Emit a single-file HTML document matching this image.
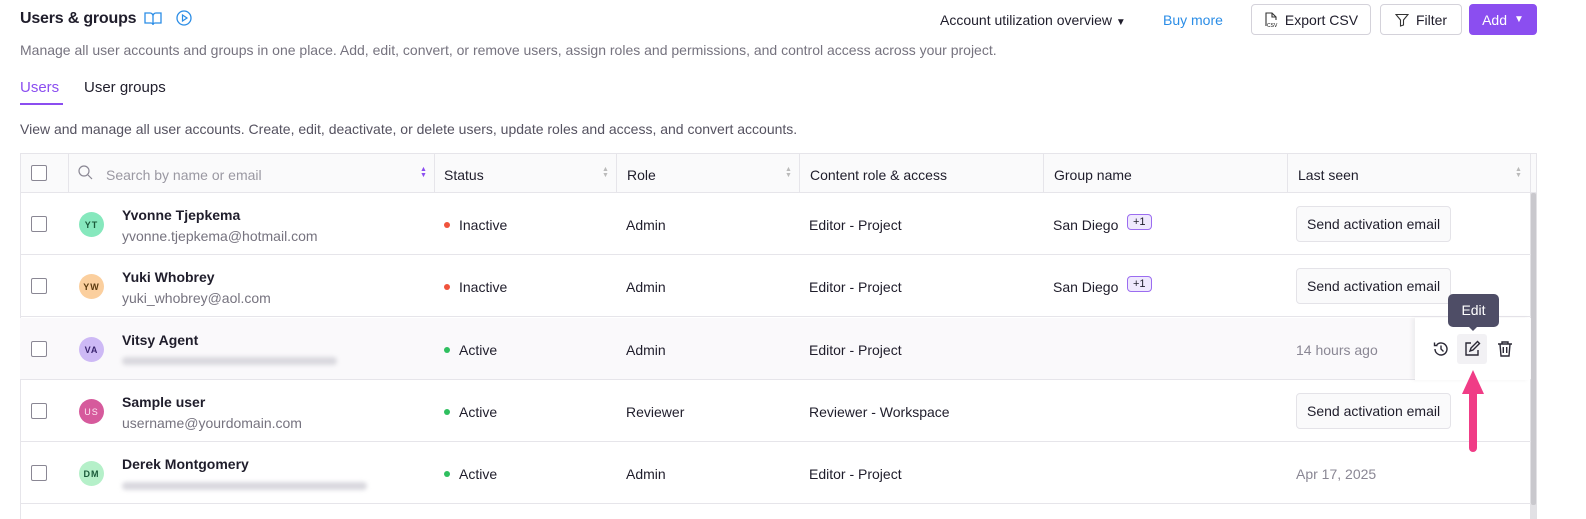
<!DOCTYPE html>
<html><head><meta charset="utf-8"><style>
*{box-sizing:border-box;margin:0;padding:0}
body{width:1586px;height:519px;overflow:hidden;background:#fff;font-family:"Liberation Sans",sans-serif;color:#1f1d2b;position:relative}
.abs{position:absolute}
.t{font-size:14px}
.btn{position:absolute;top:4px;height:31px;border:1px solid #d4d2da;border-radius:4px;background:#fff;font-size:14px;display:flex;align-items:center;justify-content:center;gap:7px}
.cb{position:absolute;width:16px;height:16px;border:1.3px solid #8a8794;border-radius:2px;background:#fff}
.row{position:absolute;left:20px;width:1511px;height:62px;border-bottom:1px solid #e6e5ea}
.av{position:absolute;width:25px;height:25px;border-radius:50%;font-size:9px;font-weight:bold;display:flex;align-items:center;justify-content:center;letter-spacing:1px}
.nm{position:absolute;font-size:14px;font-weight:bold}
.em{position:absolute;font-size:14px;color:#76737f}
.dot{position:absolute;width:6px;height:6px;border-radius:50%}
.sab{position:absolute;height:36px;border:1px solid #e4e3e8;border-radius:4px;background:#fafafb;font-size:14px;padding:0 10px;display:flex;align-items:center}
.badge{position:absolute;border:1px solid #9b6cf0;background:#efe9fd;border-radius:4px;font-size:11px;padding:1px 5px}
.hd{position:absolute;top:167px;font-size:14px}
.sep{position:absolute;top:153px;width:1px;height:40px;background:#e6e5ea}
.blur{position:absolute;height:8px;border-radius:4px;background:#d9d8de;filter:blur(2px)}
</style></head><body>
<div class="abs" style="left:20px;top:10px;font-size:16px;font-weight:bold;letter-spacing:-0.2px">Users &amp; groups</div>
<svg class="abs" style="left:144px;top:11px" width="18" height="15" viewBox="0 0 18 15"><path d="M1 2h5a3 3 0 0 1 3 3v9a2 2 0 0 0-2-2H1zM17 2h-5a3 3 0 0 0-3 3v9a2 2 0 0 1 2-2h6z" fill="none" stroke="#2b8de6" stroke-width="1.3"/></svg>
<svg class="abs" style="left:176px;top:10px" width="16" height="16" viewBox="0 0 16 16"><circle cx="8" cy="8" r="7" fill="none" stroke="#2b8de6" stroke-width="1.3"/><path d="M6.5 5v6l4.5-3z" fill="none" stroke="#2b8de6" stroke-width="1.2"/></svg>
<div class="abs t" style="left:940px;top:12px">Account utilization overview <span style="font-size:10px">▼</span></div>
<div class="abs t" style="left:1163px;top:12px;color:#2b8de6">Buy more</div>
<div class="btn" style="left:1251px;width:120px"><svg width="14" height="16" viewBox="0 0 14 16"><path d="M2 14V1h6l4 4v3M8 1v4h4" fill="none" stroke="#333" stroke-width="1.1"/><text x="3" y="15" font-size="5" font-family="Liberation Sans">CSV</text></svg>Export CSV</div>
<div class="btn" style="left:1380px;width:82px"><svg width="14" height="14" viewBox="0 0 14 14"><path d="M1 1.5h12L8.5 7v5L5.5 13V7z" fill="none" stroke="#333" stroke-width="1.1"/></svg>Filter</div>
<div class="btn" style="left:1469px;width:68px;background:#8b4ef0;border-color:#8b4ef0;color:#fff">Add <span style="font-size:10px">▼</span></div>
<div class="abs t" style="left:20px;top:42px;color:#76737f">Manage all user accounts and groups in one place. Add, edit, convert, or remove users, assign roles and permissions, and control access across your project.</div>
<div class="abs" style="left:20px;top:79px;font-size:15px;color:#8b4ef0">Users</div>
<div class="abs" style="left:20px;top:103px;width:43px;height:2px;background:#8b4ef0"></div>
<div class="abs" style="left:84px;top:79px;font-size:15px">User groups</div>
<div class="abs t" style="left:20px;top:121px;color:#555260">View and manage all user accounts. Create, edit, deactivate, or delete users, update roles and access, and convert accounts.</div>

<div class="abs" style="left:20px;top:153px;width:1517px;height:40px;background:#fafafb;border:1px solid #e6e5ea"></div>
<div class="abs" style="left:20px;top:193px;width:1px;height:326px;background:#e6e5ea"></div>
<div class="abs" style="left:1530px;top:193px;width:7px;height:326px;background:#e2e1e5"></div>
<div class="abs" style="left:1531px;top:193px;width:5px;height:312px;background:#c9c8cd;border-radius:2px"></div>
<div class="sep" style="left:68px"></div><div class="sep" style="left:434px"></div><div class="sep" style="left:616px"></div><div class="sep" style="left:799px"></div><div class="sep" style="left:1043px"></div><div class="sep" style="left:1287px"></div><div class="sep" style="left:1530px"></div>
<div class="cb" style="left:31px;top:165px"></div>
<svg class="abs" style="left:78px;top:165px" width="15" height="15" viewBox="0 0 15 15"><circle cx="6" cy="6" r="5" fill="none" stroke="#8a8794" stroke-width="1.2"/><path d="M10 10l4 4" stroke="#8a8794" stroke-width="1.2"/></svg>
<div class="hd" style="left:106px;color:#9a98a2">Search by name or email</div>
<div class="abs" style="left:420px;top:167px;font-size:7px;line-height:6px;color:#8b4ef0">▲<br>▼</div>
<div class="hd" style="left:444px">Status</div><div class="abs" style="left:602px;top:167px;font-size:7px;line-height:6px;color:#bbb">▲<br>▼</div>
<div class="hd" style="left:627px">Role</div><div class="abs" style="left:785px;top:167px;font-size:7px;line-height:6px;color:#bbb">▲<br>▼</div>
<div class="hd" style="left:810px">Content role &amp; access</div>
<div class="hd" style="left:1054px">Group name</div>
<div class="hd" style="left:1298px">Last seen</div><div class="abs" style="left:1515px;top:167px;font-size:7px;line-height:6px;color:#bbb">▲<br>▼</div>

<div class="row" style="top:193px"></div>
<div class="row" style="top:255px"></div>
<div class="row" style="top:318px;background:#faf9fb"></div>
<div class="row" style="top:380px"></div>
<div class="row" style="top:442px"></div>

<div class="cb" style="left:31px;top:216px"></div>
<div class="av" style="left:79px;top:212px;background:#86e8bd;color:#1a5a3a">YT</div>
<div class="nm" style="left:122px;top:207px">Yvonne Tjepkema</div><div class="em" style="left:122px;top:228px">yvonne.tjepkema@hotmail.com</div>
<div class="dot" style="left:444px;top:222px;background:#f0533c"></div><div class="abs t" style="left:459px;top:217px">Inactive</div>
<div class="abs t" style="left:626px;top:217px">Admin</div><div class="abs t" style="left:809px;top:217px">Editor - Project</div>
<div class="abs t" style="left:1053px;top:217px">San Diego</div><div class="badge" style="left:1127px;top:214px">+1</div>
<div class="sab" style="left:1296px;top:206px">Send activation email</div>

<div class="cb" style="left:31px;top:278px"></div>
<div class="av" style="left:79px;top:274px;background:#fbcf9e;color:#5a3a10">YW</div>
<div class="nm" style="left:122px;top:269px">Yuki Whobrey</div><div class="em" style="left:122px;top:290px">yuki_whobrey@aol.com</div>
<div class="dot" style="left:444px;top:284px;background:#f0533c"></div><div class="abs t" style="left:459px;top:279px">Inactive</div>
<div class="abs t" style="left:626px;top:279px">Admin</div><div class="abs t" style="left:809px;top:279px">Editor - Project</div>
<div class="abs t" style="left:1053px;top:279px">San Diego</div><div class="badge" style="left:1127px;top:276px">+1</div>
<div class="sab" style="left:1296px;top:268px">Send activation email</div>

<div class="cb" style="left:31px;top:341px"></div>
<div class="av" style="left:79px;top:337px;background:#cdb9f5;color:#3a2470">VA</div>
<div class="nm" style="left:122px;top:332px">Vitsy Agent</div><div class="blur" style="left:122px;top:357px;width:215px"></div>
<div class="dot" style="left:444px;top:347px;background:#2fbf5f"></div><div class="abs t" style="left:459px;top:342px">Active</div>
<div class="abs t" style="left:626px;top:342px">Admin</div><div class="abs t" style="left:809px;top:342px">Editor - Project</div>
<div class="abs t" style="left:1296px;top:342px;color:#8a8794">14 hours ago</div>
<div class="abs" style="left:1415px;top:318px;width:115px;height:62px;background:#fff;box-shadow:-3px 0 4px rgba(0,0,0,0.05)"></div>
<svg class="abs" style="left:1432px;top:340px" width="18" height="18" viewBox="0 0 18 18"><path d="M3 9a6 6 0 1 0 1.8-4.3M2.5 2.5v3h3M9 5.5V9l2.5 2.5" fill="none" stroke="#2a2835" stroke-width="1.4"/></svg>
<div class="abs" style="left:1457px;top:334px;width:30px;height:30px;background:#f2f1f4;border-radius:3px"></div>
<svg class="abs" style="left:1463px;top:340px" width="18" height="18" viewBox="0 0 18 18"><path d="M8 3H3v12h12v-5M7 11l1-3 6.5-6.5 2 2L10 10z" fill="none" stroke="#2a2835" stroke-width="1.4"/></svg>
<svg class="abs" style="left:1496px;top:340px" width="18" height="18" viewBox="0 0 18 18"><path d="M2 4h14M6 4V2h6v2M4 4l1 12h8l1-12M7.3 7v6M10.7 7v6" fill="none" stroke="#2a2835" stroke-width="1.4"/></svg>
<div class="abs" style="left:1448px;top:294px;width:51px;height:33px;background:#4e4d66;border-radius:5px;color:#fff;font-size:14px;text-align:center;line-height:33px">Edit</div>
<div class="abs" style="left:1468px;top:326px;width:0;height:0;border-left:5px solid transparent;border-right:5px solid transparent;border-top:5px solid #4e4d66"></div>

<div class="cb" style="left:31px;top:403px"></div>
<div class="av" style="left:79px;top:399px;background:#d65a9c;color:#fde8f2;font-weight:normal">US</div>
<div class="nm" style="left:122px;top:394px">Sample user</div><div class="em" style="left:122px;top:415px">username@yourdomain.com</div>
<div class="dot" style="left:444px;top:409px;background:#2fbf5f"></div><div class="abs t" style="left:459px;top:404px">Active</div>
<div class="abs t" style="left:626px;top:404px">Reviewer</div><div class="abs t" style="left:809px;top:404px">Reviewer - Workspace</div>
<div class="sab" style="left:1296px;top:393px">Send activation email</div>

<div class="cb" style="left:31px;top:465px"></div>
<div class="av" style="left:79px;top:461px;background:#b5f0c9;color:#1a5a3a">DM</div>
<div class="nm" style="left:122px;top:456px">Derek Montgomery</div><div class="blur" style="left:122px;top:482px;width:245px"></div>
<div class="dot" style="left:444px;top:471px;background:#2fbf5f"></div><div class="abs t" style="left:459px;top:466px">Active</div>
<div class="abs t" style="left:626px;top:466px">Admin</div><div class="abs t" style="left:809px;top:466px">Editor - Project</div>
<div class="abs t" style="left:1296px;top:466px;color:#8a8794">Apr 17, 2025</div>

<div class="abs" style="left:1462px;top:370px;width:0;height:0;border-left:11px solid transparent;border-right:11px solid transparent;border-bottom:24px solid #f03c86"></div>
<div class="abs" style="left:1469px;top:392px;width:8px;height:60px;background:#f03c86;border-radius:0 0 4px 4px"></div>
</body></html>
